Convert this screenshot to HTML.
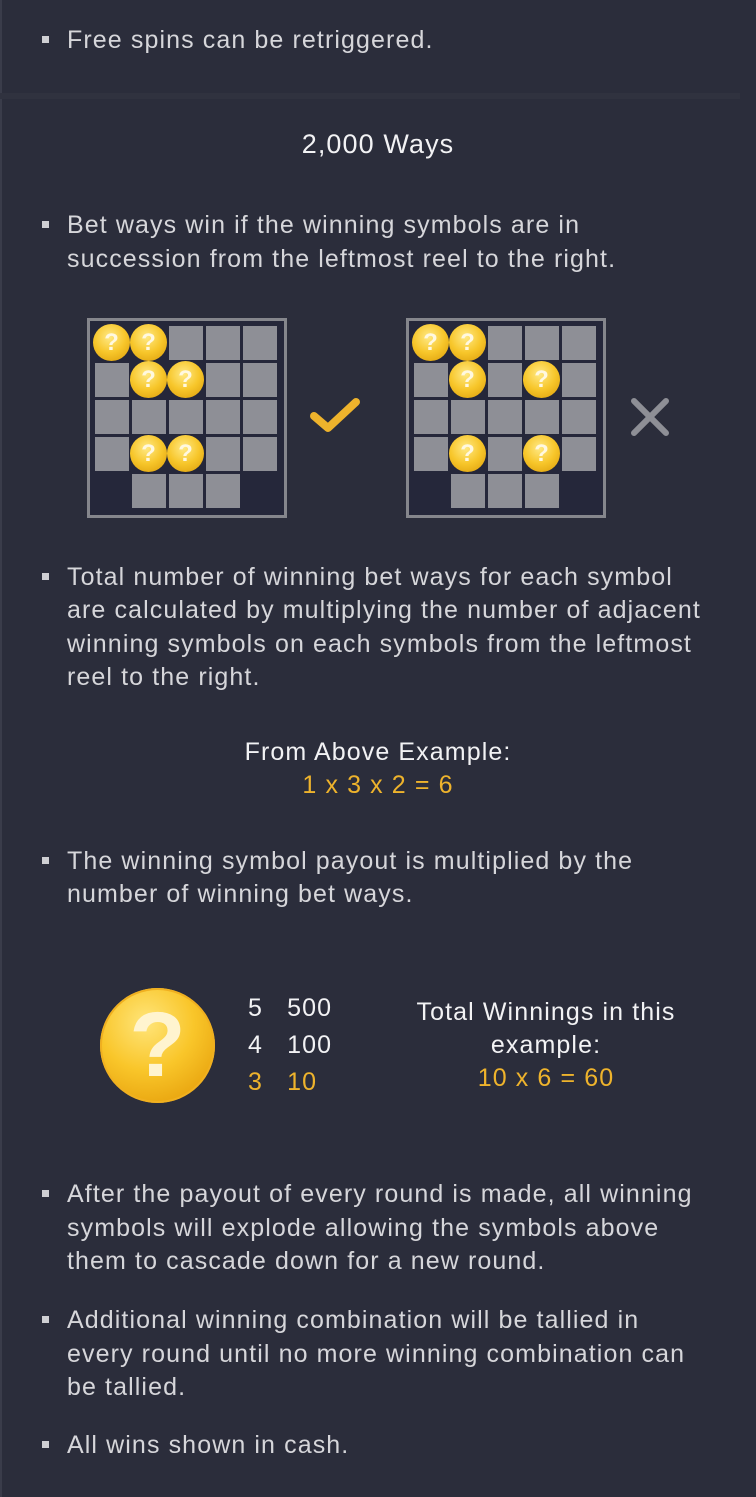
<!DOCTYPE html>
<html><head><meta charset="utf-8"><style>
*{margin:0;padding:0;box-sizing:border-box}
body{width:756px;height:1497px;background:#2b2d3b;position:relative;overflow:hidden;font-family:"Liberation Sans",sans-serif;color:#d6d6da;font-size:25px;letter-spacing:1.1px}
.t{position:absolute;line-height:34px;white-space:nowrap}
.b{position:absolute;left:42px;width:7px;height:7px;background:#cfcfd3}
.y{color:#eeb32c}
.c{text-align:center}
.grid{position:absolute;width:200px;height:200px;border:3px solid #85868c;background:#25273a}
.cell{position:absolute;width:34px;height:34px;background:#8e8f96}
.coin{position:absolute;width:37px;height:37px;border-radius:50%;background:radial-gradient(circle at 45% 35%,#ffe985 0%,#f7c62a 50%,#d99a08 100%);color:#fff8e0;font-weight:bold;font-size:24px;line-height:37px;text-align:center;letter-spacing:0}
</style></head><body>
<div style="position:absolute;left:0;top:0;width:2px;height:1497px;background:#3a3c4a"></div>
<div style="position:absolute;left:0;top:93px;width:740px;height:6px;background:#30323f"></div>

<div class="b" style="top:36px"></div><div class="t" style="left:67px;top:23px">Free spins can be retriggered.</div>
<div class="t c" style="left:0;width:756px;top:127px;font-size:27px;color:#f2f2f4">2,000 Ways</div>

<div class="b" style="top:221px"></div>
<div class="t" style="left:67px;top:208px">Bet ways win if the winning symbols are in</div>
<div class="t" style="left:67px;top:242px">succession from the leftmost reel to the right.</div>

<div id="g1" class="grid" style="left:87px;top:318px"></div>
<div id="g2" class="grid" style="left:406px;top:318px"></div>
<svg style="position:absolute;left:306px;top:392px" width="60" height="45"><path d="M8 24 L22 36 L50 10" stroke="#eeb32c" stroke-width="8" fill="none" stroke-linecap="round" stroke-linejoin="round"/></svg>
<svg style="position:absolute;left:626px;top:393px" width="48" height="48"><path d="M8 8 L40 40 M40 8 L8 40" stroke="#8e8f96" stroke-width="6" fill="none" stroke-linecap="round"/></svg>

<div class="b" style="top:573px"></div>
<div class="t" style="left:67px;top:560px">Total number of winning bet ways for each symbol</div>
<div class="t" style="left:67px;top:593px">are calculated by multiplying the number of adjacent</div>
<div class="t" style="left:67px;top:627px">winning symbols on each symbols from the leftmost</div>
<div class="t" style="left:67px;top:660px">reel to the right.</div>

<div class="t c" style="left:0;width:756px;top:735px;color:#f2f2f4">From Above Example:</div>
<div class="t c y" style="left:0;width:756px;top:768px">1 x 3 x 2 = 6</div>

<div class="b" style="top:857px"></div>
<div class="t" style="left:67px;top:844px">The winning symbol payout is multiplied by the</div>
<div class="t" style="left:67px;top:877px">number of winning bet ways.</div>

<div style="position:absolute;left:100px;top:988px;width:115px;height:115px;border-radius:50%;background:radial-gradient(circle at 40% 30%,#ffe57a 0%,#f9c62a 45%,#e7a10c 85%,#c98300 100%);box-shadow:0 0 0 2px #f0b020 inset"></div>
<div style="position:absolute;left:100px;top:988px;width:115px;height:115px;line-height:115px;text-align:center;font-size:92px;font-weight:bold;color:#fff4cf;letter-spacing:0">?</div>

<div class="t" style="left:248px;top:991px;color:#f2f2f4">5&nbsp;&nbsp;&nbsp;500</div>
<div class="t" style="left:248px;top:1028px;color:#f2f2f4">4&nbsp;&nbsp;&nbsp;100</div>
<div class="t y" style="left:248px;top:1065px">3&nbsp;&nbsp;&nbsp;10</div>

<div class="t c" style="left:386px;width:320px;top:995px;color:#f2f2f4">Total Winnings in this</div>
<div class="t c" style="left:386px;width:320px;top:1028px;color:#f2f2f4">example:</div>
<div class="t c y" style="left:386px;width:320px;top:1061px">10 x 6 = 60</div>

<div class="b" style="top:1190px"></div>
<div class="t" style="left:67px;top:1177px">After the payout of every round is made, all winning</div>
<div class="t" style="left:67px;top:1211px">symbols will explode allowing the symbols above</div>
<div class="t" style="left:67px;top:1244px">them to cascade down for a new round.</div>

<div class="b" style="top:1316px"></div>
<div class="t" style="left:67px;top:1303px">Additional winning combination will be tallied in</div>
<div class="t" style="left:67px;top:1337px">every round until no more winning combination can</div>
<div class="t" style="left:67px;top:1370px">be tallied.</div>

<div class="b" style="top:1441px"></div>
<div class="t" style="left:67px;top:1428px">All wins shown in cash.</div>

<script>
function build(id,layout){
  var g=document.getElementById(id);
  for(var r=0;r<5;r++)for(var c=0;c<5;c++){
    var v=layout[r][c];if(v==='.')continue;
    var d=document.createElement('div');
    var x=5+c*37,y=5+r*37;
    if(v==='o'){d.className='coin';d.style.left=(x-2)+'px';d.style.top=(y-2)+'px';d.textContent='?';}
    else{d.className='cell';d.style.left=x+'px';d.style.top=y+'px';}
    g.appendChild(d);
  }
}
build('g1',['oo###','#oo##','#####','#oo##','.###.']);
build('g2',['oo###','#o#o#','#####','#o#o#','.###.']);
</script>
</body></html>
